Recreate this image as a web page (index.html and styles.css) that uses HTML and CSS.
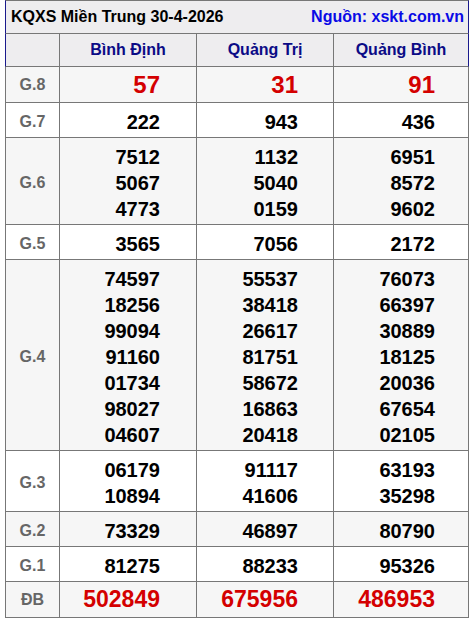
FILE: index.html
```html
<!DOCTYPE html>
<html lang="vi">
<head>
<meta charset="utf-8">
<title>KQXS Miền Trung 30-4-2026</title>
<link rel="stylesheet" href="styles.css">
</head>
<body>
<div class="kq">
  <div class="title"><span class="t-left">KQXS Miền Trung 30-4-2026</span><span class="t-right">Nguồn: xskt.com.vn</span></div>

  <div class="row head">
    <div class="cell lbl"></div>
    <div class="cell hd">Bình Định</div>
    <div class="cell hd">Quảng Trị</div>
    <div class="cell hd">Quảng Bình</div>
  </div>

  <div class="row alt big">
    <div class="cell lbl">G.8</div>
    <div class="cell num red"><div>57</div></div>
    <div class="cell num red"><div>31</div></div>
    <div class="cell num red"><div>91</div></div>
  </div>

  <div class="row">
    <div class="cell lbl">G.7</div>
    <div class="cell num"><div>222</div></div>
    <div class="cell num"><div>943</div></div>
    <div class="cell num"><div>436</div></div>
  </div>

  <div class="row alt">
    <div class="cell lbl">G.6</div>
    <div class="cell num"><div>7512</div><div>5067</div><div>4773</div></div>
    <div class="cell num"><div>1132</div><div>5040</div><div>0159</div></div>
    <div class="cell num"><div>6951</div><div>8572</div><div>9602</div></div>
  </div>

  <div class="row">
    <div class="cell lbl">G.5</div>
    <div class="cell num"><div>3565</div></div>
    <div class="cell num"><div>7056</div></div>
    <div class="cell num"><div>2172</div></div>
  </div>

  <div class="row alt">
    <div class="cell lbl">G.4</div>
    <div class="cell num"><div>74597</div><div>18256</div><div>99094</div><div>91160</div><div>01734</div><div>98027</div><div>04607</div></div>
    <div class="cell num"><div>55537</div><div>38418</div><div>26617</div><div>81751</div><div>58672</div><div>16863</div><div>20418</div></div>
    <div class="cell num"><div>76073</div><div>66397</div><div>30889</div><div>18125</div><div>20036</div><div>67654</div><div>02105</div></div>
  </div>

  <div class="row">
    <div class="cell lbl">G.3</div>
    <div class="cell num"><div>06179</div><div>10894</div></div>
    <div class="cell num"><div>91117</div><div>41606</div></div>
    <div class="cell num"><div>63193</div><div>35298</div></div>
  </div>

  <div class="row alt">
    <div class="cell lbl">G.2</div>
    <div class="cell num"><div>73329</div></div>
    <div class="cell num"><div>46897</div></div>
    <div class="cell num"><div>80790</div></div>
  </div>

  <div class="row">
    <div class="cell lbl">G.1</div>
    <div class="cell num"><div>81275</div></div>
    <div class="cell num"><div>88233</div></div>
    <div class="cell num"><div>95326</div></div>
  </div>

  <div class="row alt big db">
    <div class="cell lbl">ĐB</div>
    <div class="cell num red"><div>502849</div></div>
    <div class="cell num red"><div>675956</div></div>
    <div class="cell num red"><div>486953</div></div>
  </div>
</div>
</body>
</html>
```

FILE: styles.css
```css
html, body {
  margin: 0;
  padding: 0;
  background: #ffffff;
}

body {
  font-family: "Liberation Sans", Arial, Helvetica, sans-serif;
  font-weight: bold;
  color: #000000;
}

.kq {
  display: grid;
  grid-template-columns: 55px 137px 137px 135px;
  width: 464px;
  margin-left: 5px;
}

.row {
  display: contents;
}

.cell {
  box-sizing: border-box;
  border-right: 1px solid #777777;
  border-bottom: 1px solid #777777;
  background: #ffffff;
}

.row > .cell:first-child {
  border-left: 1px solid #777777;
}

.title {
  grid-column: 1 / -1;
  display: flex;
  justify-content: space-between;
  align-items: center;
  height: 34px;
  box-sizing: border-box;
  border-top: 1px solid #777777;
  border-bottom: 1px solid #777777;
  border-left: 1px solid #1a1a8c;
  border-right: 1px solid #1a1a8c;
  background: #eeedef;
  padding: 0 4px 0 5px;
  font-size: 16px;
  line-height: 32px;
}

.t-left {
  color: #000000;
}

.t-right {
  color: #0a0ae6;
}

.head > .cell {
  height: 33px;
  background: #eeedef;
  font-size: 16px;
  line-height: 32px;
  text-align: center;
  color: #0b0b86;
}

.head > .cell:first-child {
  border-left-color: #1a1a8c;
}

.head > .cell:last-child {
  border-right-color: #1a1a8c;
}

.alt > .cell {
  background: #f6f6f6;
}

.lbl {
  display: flex;
  align-items: center;
  justify-content: center;
  padding: 6px 0 2px;
  font-size: 16px;
  line-height: 20px;
  color: #666666;
}

.num {
  padding: 6px 36px 2px 0;
  font-size: 20px;
  line-height: 26px;
  text-align: right;
}

.row > .num:nth-child(3) {
  padding-right: 35px;
}

.row > .num:nth-child(4) {
  padding-right: 33px;
}

.big > .cell {
  padding-top: 4px;
  padding-bottom: 4px;
}

.big > .num {
  font-size: 24px;
  line-height: 27px;
}

.db > .num {
  font-size: 23px;
}

.red {
  color: #d40000;
}
```
